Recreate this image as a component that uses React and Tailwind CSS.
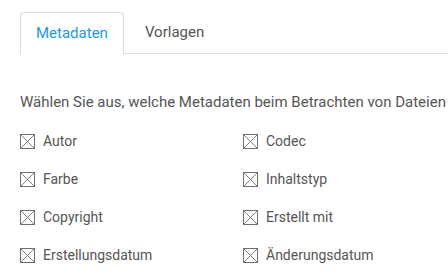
import React from 'react';

const fields = [
  ['Autor', 'Codec'],
  ['Farbe', 'Inhaltstyp'],
  ['Copyright', 'Erstellt mit'],
  ['Erstellungsdatum', 'Änderungsdatum'],
];

const CrossBox = () => (
  <svg width="15" height="15" viewBox="0 0 15 15" className="shrink-0">
    <rect x="0.5" y="0.5" width="14" height="14" fill="none" stroke="#707070" strokeWidth="1" />
    <path d="M1 1 L14 14 M14 1 L1 14" stroke="#707070" strokeWidth="0.9" />
  </svg>
);

const App = () => {
  return (
    <div className="w-[448px] h-[276px] overflow-hidden bg-white font-['Roboto',sans-serif] text-[#555]">
      {/* Tabs */}
      <div className="pt-3 pl-5 flex items-end">
        <div className="h-[42px] px-[15px] flex items-center border border-[#dedede] border-b-0 rounded-t-[4px] text-[15px] text-[#1a9ae6] bg-white">
          Metadaten
        </div>
        <div className="flex-1 h-[42px] border-b border-[#dedede] flex items-center pl-[21px] text-[15px] text-[#555]">
          Vorlagen
        </div>
      </div>

      {/* Description */}
      <p className="mt-[37px] pl-5 text-[15px] leading-[22px] whitespace-nowrap">
        Wählen Sie aus, welche Metadaten beim Betrachten von Dateien
      </p>

      {/* Options */}
      <div className="mt-[9px] pl-5 grid grid-cols-[223px_1fr]">
        {fields.map((row) =>
          row.map((label) => (
            <div key={label} className="h-[38px] flex items-center gap-[8px] text-[14px]">
              <CrossBox />
              <span>{label}</span>
            </div>
          ))
        )}
      </div>
    </div>
  );
};

export default App;
